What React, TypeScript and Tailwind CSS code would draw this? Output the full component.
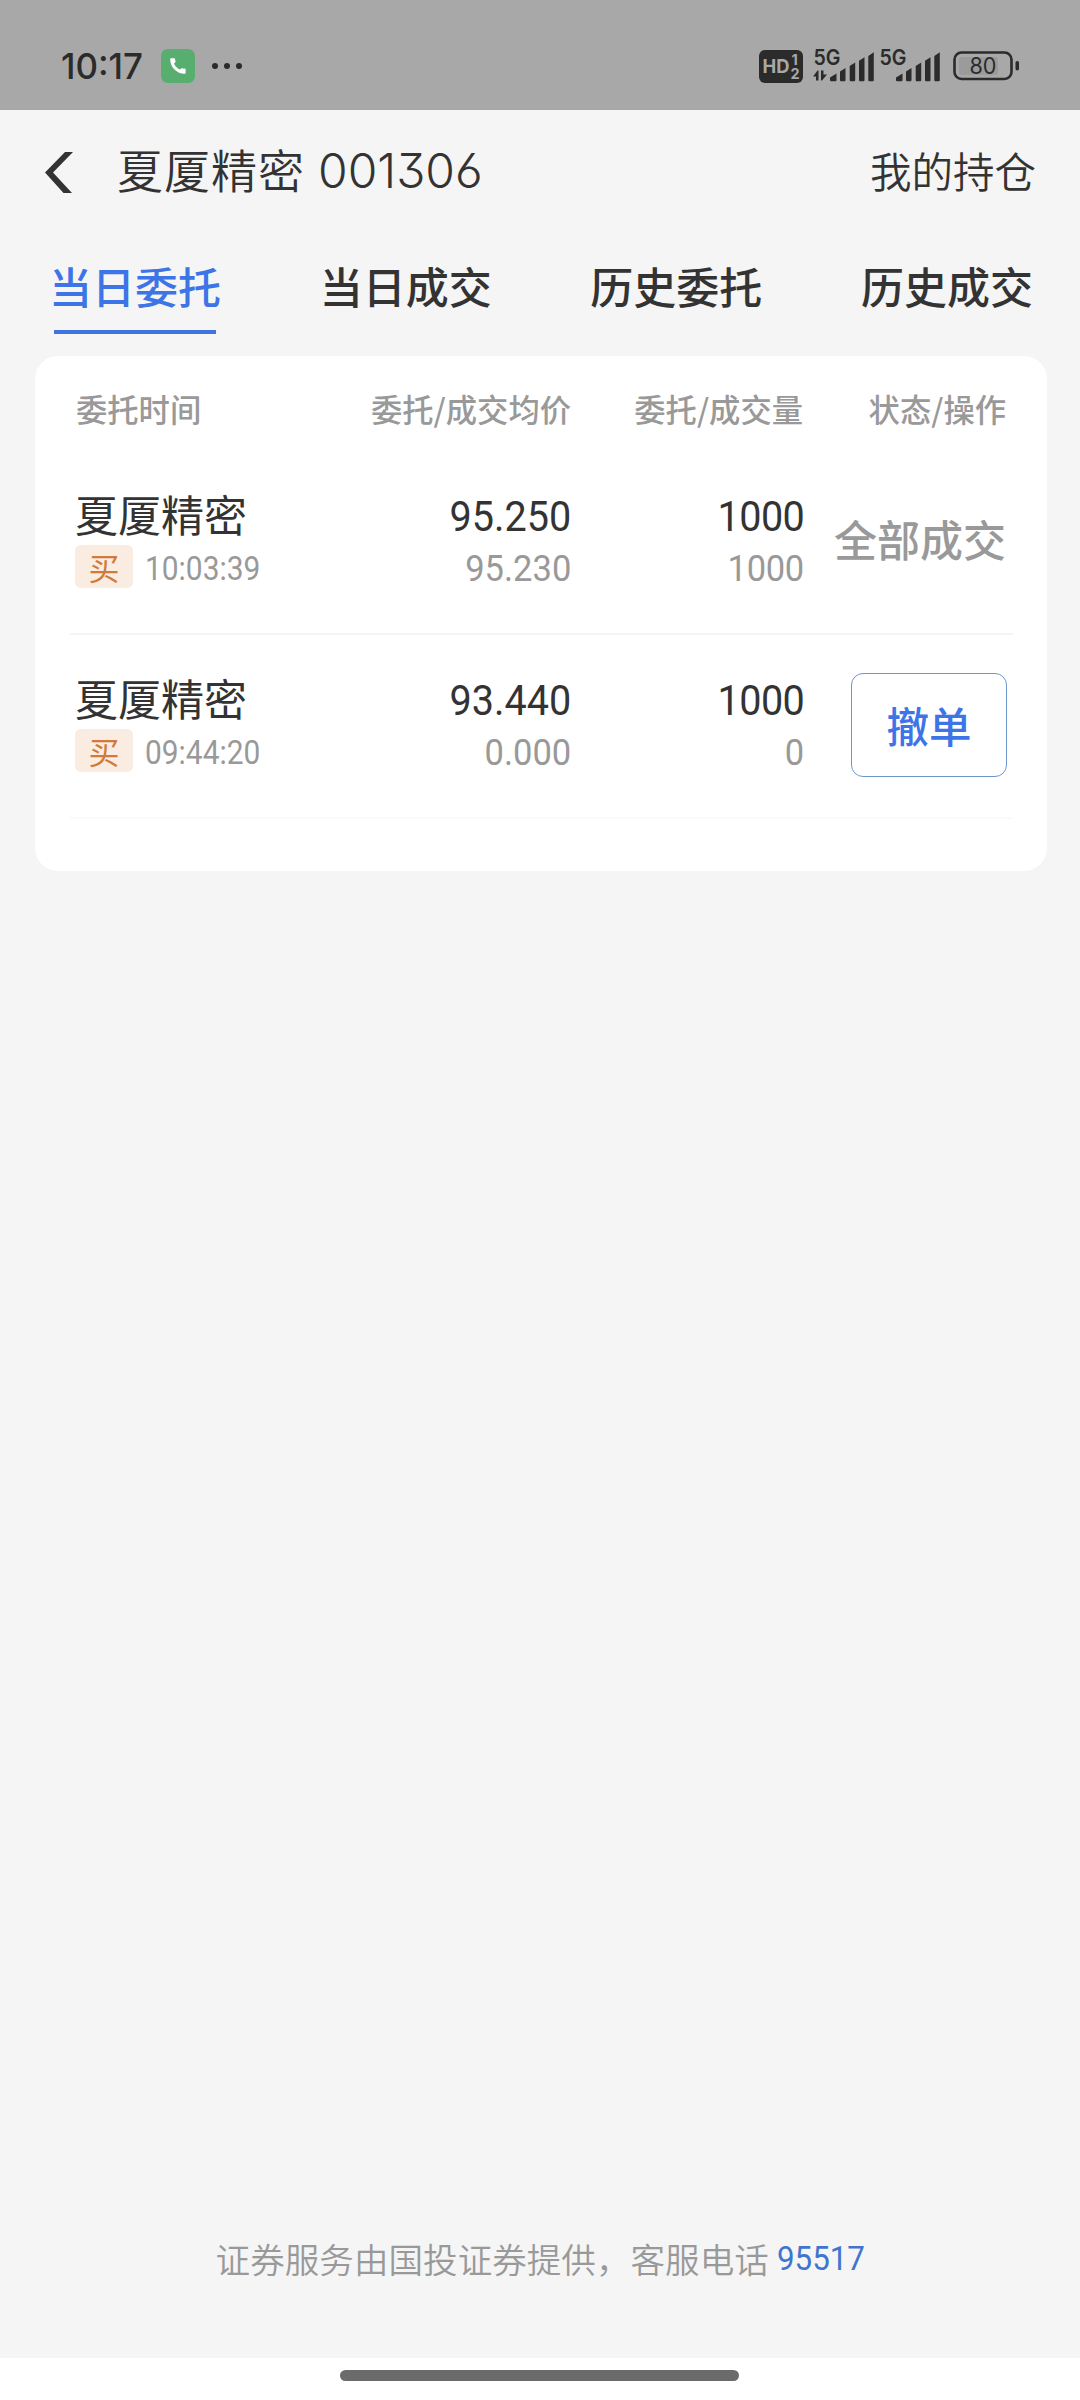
import React from 'react'
import clsx from 'clsx'

const orders = [
    {
        name: '夏厦精密',
        side: '买',
        time: '10:03:39',
        price: '95.250',
        avgPrice: '95.230',
        amount: '1000',
        dealAmount: '1000',
        status: '全部成交',
        cancelable: false
    },
    {
        name: '夏厦精密',
        side: '买',
        time: '09:44:20',
        price: '93.440',
        avgPrice: '0.000',
        amount: '1000',
        dealAmount: '0',
        status: '撤单',
        cancelable: true
    }
]

const tabs = ['当日委托', '当日成交', '历史委托', '历史成交']

function SignalBars({ data }: { data?: boolean }) {
    return (
        <svg className="h-[34px] w-[66px] overflow-visible" viewBox="0 0 66 34" fill="#2b2b2b">
            <text x="0.5" y="15.5" fontFamily="Inter" fontSize="21" fontWeight="600" textLength="27" lengthAdjust="spacingAndGlyphs">5G</text>
            {data && (
                <>
                    <path d="M0 27.5L4.5 21.5H5.5V31.5H3V27.5Z" />
                    <path d="M8 21.5H10.5V25.5H14L9 31.5H8Z" />
                </>
            )}
            <path d="M17 31V28.5L23.5 24.5V31Q23.5 32.3 22.5 32.3H18Q17 32.3 17 31Z" />
            <path d="M27 22.5L32.5 19V31Q32.5 32.3 31.5 32.3H28Q27 32.3 27 31Z" />
            <path d="M36.7 17L42.2 13.5V31Q42.2 32.3 41.2 32.3H37.7Q36.7 32.3 36.7 31Z" />
            <path d="M46 11.8L51.5 8.3V31Q51.5 32.3 50.5 32.3H47Q46 32.3 46 31Z" />
            <path d="M55.3 7L60.8 3.3V31Q60.8 32.3 59.8 32.3H56.3Q55.3 32.3 55.3 31Z" />
        </svg>
    )
}

function StatusBar() {
    return (
        <div className="flex h-[110px] items-center bg-[#a8a8a8] pt-[22px] pr-[60px] pl-[61px] text-[#2b2b2b]">
            <div className="w-[82px] font-[Inter] text-[36px] leading-[36px] font-medium">
                <span className="inline-block origin-left scale-x-[0.97] whitespace-nowrap">10:17</span>
            </div>
            <div className="ml-[18px] flex size-[34px] items-center justify-center rounded-[7px] bg-[#57ae6e]">
                <svg className="size-[16px]" viewBox="0 0 16 16" fill="#fff">
                    <path d="M1.2.3h3.6l.8 3.8L4 5.6c1 2.7 3.2 4.9 6 6l1.4-1.3 4.2.5v3.9c0 .7-.4 1.1-1.1 1.1C7 15.8.2 9 .2 1.4.2.7.5.3 1.2.3z" />
                </svg>
            </div>
            <div className="ml-[17px] flex gap-[6px]">
                <i className="size-[6px] rounded-full bg-[#2b2b2b]" />
                <i className="size-[6px] rounded-full bg-[#2b2b2b]" />
                <i className="size-[6px] rounded-full bg-[#2b2b2b]" />
            </div>
            <div className="ml-auto flex items-center">
                <svg className="mr-[10px] h-[33px] w-[44px]" viewBox="0 0 44 33">
                    <rect width="44" height="33" rx="6" fill="#2b2b2b" />
                    <g fill="#a8a8a8" fontFamily="Inter" fontWeight="700">
                        <text x="3.5" y="23" fontSize="18.5" textLength="27" lengthAdjust="spacingAndGlyphs">HD</text>
                        <text x="32.5" y="14.5" fontSize="14.5">1</text>
                        <text x="31.5" y="28.5" fontSize="14.5">2</text>
                    </g>
                </svg>
                <SignalBars data />
                <SignalBars />
                <svg className="ml-[8px] h-[30px] w-[67px]" viewBox="0 0 67 30">
                    <rect x="1.5" y="1.5" width="57" height="26.5" rx="7" fill="none" stroke="#2b2b2b" strokeWidth="2.6" />
                    <rect x="6" y="6" width="39" height="18" rx="2" fill="#9b9b9b" />
                    <rect x="62.5" y="10" width="3.5" height="9.5" rx="1.7" fill="#2b2b2b" />
                    <text x="16.5" y="23" fontFamily="Inter" fontSize="23" fill="#2b2b2b" textLength="27" lengthAdjust="spacingAndGlyphs">80</text>
                </svg>
            </div>
        </div>
    )
}

// digits are set a little narrower than the font draws them
function Digits({ children, className }: { children: string, className?: string }) {
    return (
        <span className={clsx('inline-block scale-x-[0.92] font-[Roboto] whitespace-nowrap', className)}>
            {children}
        </span>
    )
}

function OrderRow({ order }: { order: typeof orders[number] }) {
    return (
        <div className="flex h-[184px] border-b-2 border-[#f5f5f5] pr-[7px] pl-[5px] last:border-[#fafafa]">
            <div className="w-[248px] pt-[40px]">
                <div className="text-[43px] leading-[44px] whitespace-nowrap">{order.name}</div>
                <div className="mt-[10px] flex items-start">
                    <span className="h-[43px] w-[58px] rounded-[6px] bg-[#faece1] text-center text-[31px] leading-[43px] text-[#d17a3c]">
                        {order.side}
                    </span>
                    <Digits className="ml-[12px] origin-left pt-[3px] text-[32.5px] leading-[43px] text-[#999]">{order.time}</Digits>
                </div>
            </div>
            <div className="flex w-[248px] flex-col items-end pt-[40px]">
                <Digits className="origin-right text-[43px] leading-[50px]">{order.price}</Digits>
                <Digits className="mt-[5px] origin-right text-[37.5px] leading-[44px] text-[#999]">{order.avgPrice}</Digits>
            </div>
            <div className="flex w-[233px] flex-col items-end pt-[40px]">
                <Digits className="origin-right text-[43px] leading-[50px] tracking-[-0.6px]">{order.amount}</Digits>
                <Digits className="mt-[5px] origin-right text-[37.5px] leading-[44px] tracking-[-0.4px] text-[#999]">{order.dealAmount}</Digits>
            </div>
            <div className="flex flex-1 justify-end">
                {order.cancelable ? (
                    <button className="mt-[38px] -mr-px h-[104px] w-[156px] rounded-[12px] border border-[#6b97cc] text-[42.5px] leading-[100px] font-medium text-[#3d74e6]">
                        {order.status}
                    </button>
                ) : (
                    <span className="mt-[65px] text-[43px] leading-[44px] font-medium whitespace-nowrap text-[#999]">
                        {order.status}
                    </span>
                )}
            </div>
        </div>
    )
}

export default function App() {
    return (
        <div className="flex h-[2400px] w-[1080px] flex-col overflow-hidden bg-[#f5f5f5] font-['Noto_Sans_CJK_SC',sans-serif] text-[#333]">
            <StatusBar />

            <header className="flex h-[125px] items-center pr-[44px] pl-[45px]">
                <svg className="h-[41px] w-[28px]" viewBox="0 0 28 41" fill="#333">
                    <path d="M20 0H28L8 20.5L27 41H18.5L0 20.5Z" />
                </svg>
                <h1 className="ml-[44px] flex items-center pb-[10px] text-[46px] leading-[50px] font-[350] tracking-[1px]">
                    夏厦精密
                    <span className="ml-[13px] pt-[7px] font-[Inter] text-[48px] font-[350] tracking-[0px] [font-feature-settings:'cv03','cv04','cv09']">
                        001306
                    </span>
                </h1>
                <span className="ml-auto pb-[5px] text-[41.5px] leading-[50px] font-[350]">我的持仓</span>
            </header>

            <nav className="flex h-[121px] justify-between pt-[28px] pr-[47px] pl-[49px]">
                {tabs.map((tab, i) => (
                    <div key={tab} className={clsx('text-[43px] leading-[44px] font-medium', i === 0 && 'text-[#3d74e6]')}>
                        {tab}
                        {i === 0 && <div className="mx-auto mt-[23px] h-[4px] w-[162px] bg-[#3f74e0]" />}
                    </div>
                ))}
            </nav>

            <main className="ml-[35px] h-[515px] w-[1012px] rounded-[23px] bg-white pr-[34px] pl-[35px]">
                <div className="flex h-[95px] pt-[35px] pr-[7px] pl-[6px] text-[31.3px] leading-[36px] font-medium whitespace-nowrap text-[#999]">
                    <span className="w-[247px]">委托时间</span>
                    <span className="w-[248px] text-right">委托/成交均价</span>
                    <span className="w-[232px] text-right">委托/成交量</span>
                    <span className="flex-1 text-right">状态/操作</span>
                </div>
                {orders.map((order) => (
                    <OrderRow key={order.time} order={order} />
                ))}
            </main>

            <footer className="mt-auto">
                <p className="mb-[76px] flex justify-center pl-[8px] text-[34.6px] leading-[48px] font-[350] text-[#999]">
                    证券服务由国投证券提供，客服电话
                    <Digits className="ml-[8px] origin-left text-[34px] font-normal text-[#3f74d0]">95517</Digits>
                </p>
                <div className="flex h-[42px] justify-center bg-white pt-[12px]">
                    <div className="h-[11px] w-[399px] -translate-x-px rounded-full bg-[#6b6b6b]" />
                </div>
            </footer>
        </div>
    )
}
